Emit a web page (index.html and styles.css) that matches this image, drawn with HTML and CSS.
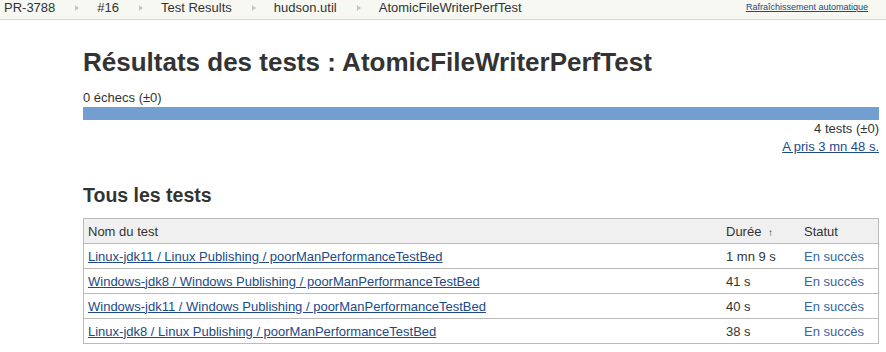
FILE: index.html
```html
<!DOCTYPE html>
<html lang="fr">
<head>
    <meta charset="UTF-8">
    <title>Résultats des tests : AtomicFileWriterPerfTest</title>
    <link rel="stylesheet" href="styles.css">
</head>
<body>

    <div class="breadcrumbs">
        <ul class="crumbs">
            <li><a href="#">PR-3788</a></li>
            <li class="sep"></li>
            <li><a href="#">#16</a></li>
            <li class="sep"></li>
            <li><a href="#">Test Results</a></li>
            <li class="sep"></li>
            <li><a href="#">hudson.util</a></li>
            <li class="sep"></li>
            <li><a href="#">AtomicFileWriterPerfTest</a></li>
        </ul>
        <a class="auto-refresh" href="#">Rafraîchissement automatique</a>
    </div>

    <div class="main">
        <h1>Résultats des tests : AtomicFileWriterPerfTest</h1>

        <div class="failures">0 échecs (±0)</div>
        <div class="result-bar"></div>
        <div class="totals">4 tests (±0)</div>
        <div class="took"><a href="#">A pris 3 mn 48 s.</a></div>

        <h2>Tous les tests</h2>

        <table class="tests">
            <thead>
                <tr>
                    <th class="col-name">Nom du test</th>
                    <th class="col-duration">Durée <span class="arrow">↑</span></th>
                    <th class="col-status">Statut</th>
                </tr>
            </thead>
            <tbody>
                <tr>
                    <td><a href="#">Linux-jdk11 / Linux Publishing / poorManPerformanceTestBed</a></td>
                    <td>1 mn 9 s</td>
                    <td class="passed">En succès</td>
                </tr>
                <tr>
                    <td><a href="#">Windows-jdk8 / Windows Publishing / poorManPerformanceTestBed</a></td>
                    <td>41 s</td>
                    <td class="passed">En succès</td>
                </tr>
                <tr>
                    <td><a href="#">Windows-jdk11 / Windows Publishing / poorManPerformanceTestBed</a></td>
                    <td>40 s</td>
                    <td class="passed">En succès</td>
                </tr>
                <tr>
                    <td><a href="#">Linux-jdk8 / Linux Publishing / poorManPerformanceTestBed</a></td>
                    <td>38 s</td>
                    <td class="passed">En succès</td>
                </tr>
            </tbody>
        </table>
    </div>

</body>
</html>
```

FILE: styles.css
```css
body {
    font-family: "Liberation Sans", Arial, sans-serif;
    font-size: 13px;
    color: #333;
    margin: 0;
    background-color: #fff;
}
a {
    color: #204a87;
}
/* top breadcrumb bar */
.breadcrumbs {
    display: flex;
    align-items: flex-start;
    height: 19px;
    background-color: #f6f8f1;
    border-bottom: 1px solid #d3d7cf;
    padding: 0 18px 0 4px;
}
.crumbs {
    display: flex;
    flex: 1;
    list-style: none;
    margin: 0;
    padding: 0;
    line-height: 15px;
}
.crumbs a {
    color: #333;
    text-decoration: none;
}
.crumbs .sep {
    width: 0;
    height: 0;
    margin: 5px 18px 0 20px;
    border-top: 3px solid transparent;
    border-bottom: 3px solid transparent;
    border-left: 4px solid #c4c8bf;
}
.auto-refresh {
    font-size: 9px;
    line-height: 15px;
}
/* main content */
.main {
    padding: 0 7px 0 83px;
}
h1 {
    font-size: 26px;
    line-height: 32px;
    margin: 26px 0 12px;
}
.failures {
    line-height: 16px;
}
.result-bar {
    height: 13px;
    background-color: #729fcf;
    margin-top: 1px;
}
.totals, .took {
    text-align: right;
    line-height: 16px;
}
.totals {
    margin-top: 1px;
}
.took {
    margin-top: 2px;
}
h2 {
    font-size: 19.5px;
    line-height: 24px;
    margin: 28px 0 11px;
}
/* test table */
.tests {
    width: 100%;
    border-collapse: collapse;
    border: 1px solid #bbb;
}
.tests th, .tests td {
    text-align: left;
    height: 24px;
    padding: 0 5px;
    border-bottom: 1px solid #bbb;
}
.tests th:first-child, .tests td:first-child {
    padding-left: 4px;
}
.tests th {
    font-weight: normal;
    background-color: #f0f0f0;
}
.tests thead tr {
    border-bottom: 1px solid #f0f0f0;
}
.col-duration {
    width: 68px;
}
.col-status {
    width: 69px;
}
.arrow {
    font-size: 10px;
    margin-left: 3px;
}
.passed {
    color: #3465a4;
}
```
